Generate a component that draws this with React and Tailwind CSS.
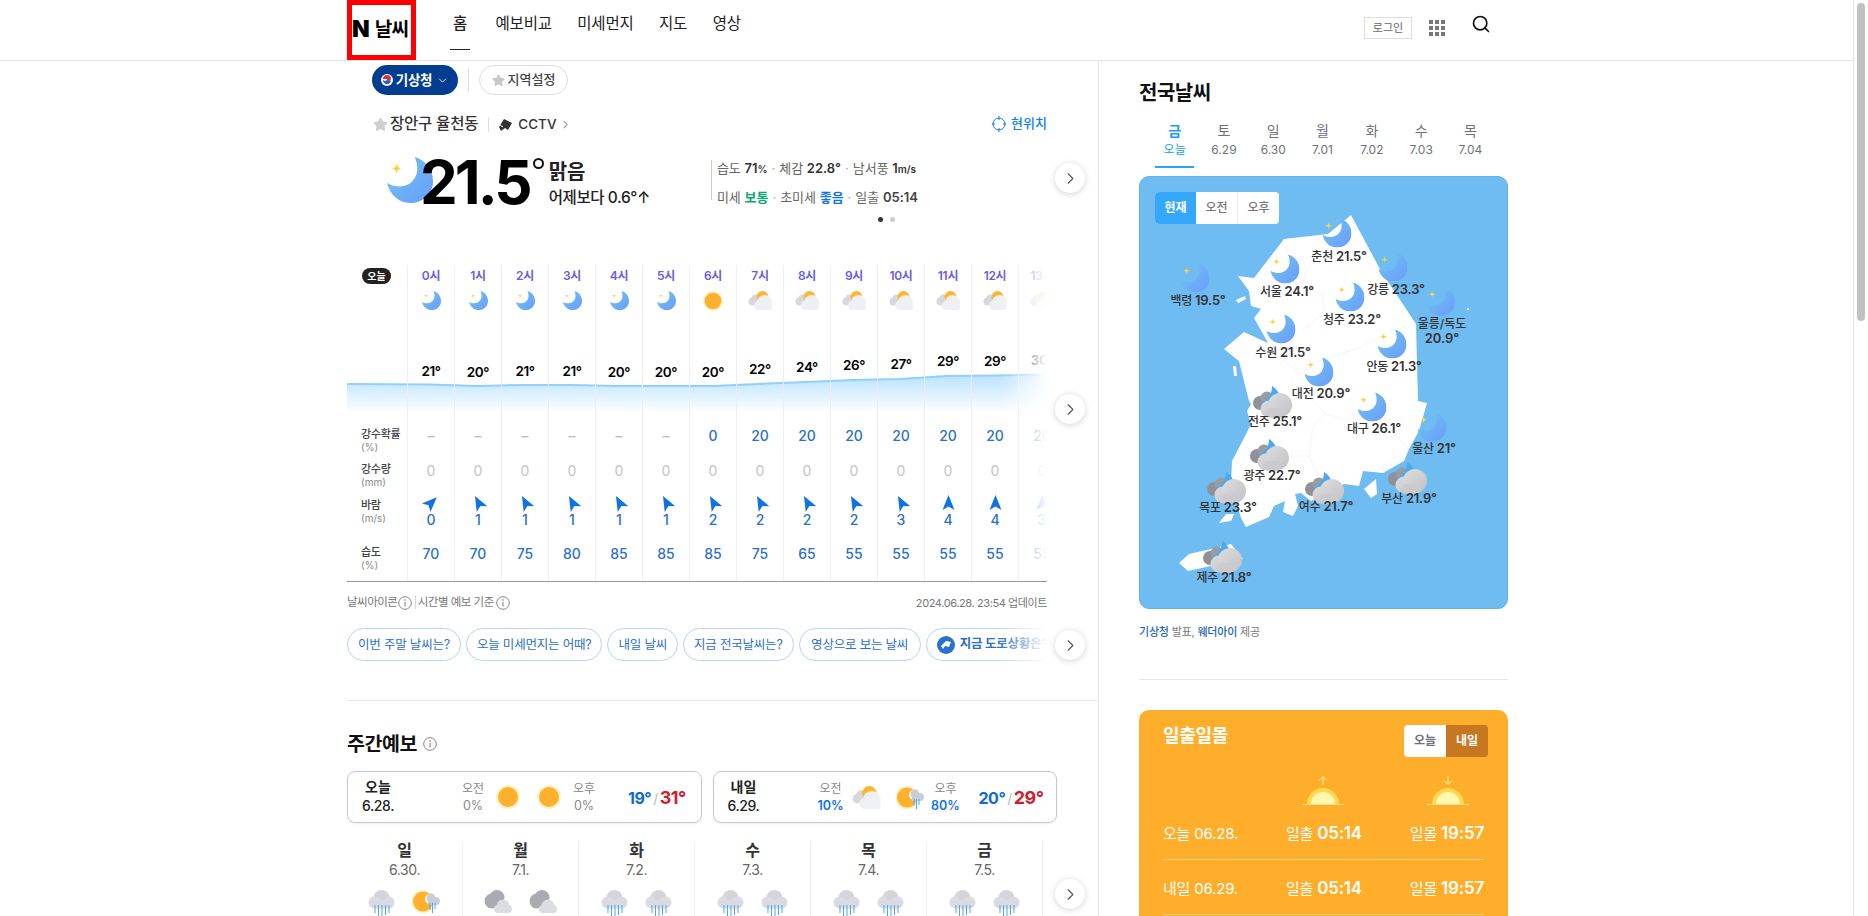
import React from "react";
import { ChevronRight, ChevronDown, Star, Search } from "lucide-react";

const Moon = ({ size = 19 }) => (
  <svg width={size} height={size} viewBox="0 0 100 100" className="shrink-0">
    <defs>
      <linearGradient id="mg" x1="0" y1="0" x2="1" y2="1">
        <stop offset="0" stopColor="#6fc6ef" />
        <stop offset="1" stopColor="#6a9cfc" />
      </linearGradient>
    </defs>
    <path d="M60 0C82 6 100 26 100 52C100 80 78 100 50 100C26 100 6 82 0 56C8 62 18 64 28 64C50 64 66 46 66 26C66 16 64 8 60 0Z" fill="url(#mg)" />
    <path d="M21 14C23 22 24 23 32 25C24 27 23 28 21 36C19 28 18 27 10 25C18 23 19 22 21 14Z" fill="#ffd23c" />
  </svg>
);

const Sun = ({ size = 20 }) => (
  <svg width={size} height={size} viewBox="0 0 24 24" className="shrink-0">
    <circle cx="12" cy="12" r="12" fill="#fff2c6" />
    <circle cx="12" cy="12" r="10" fill="#ffb12d" />
  </svg>
);

const CloudSun = ({ w = 25, h = 19 }) => (
  <svg width={w} height={h} viewBox="0 0 50 38" className="shrink-0">
    <circle cx="9" cy="21" r="8" fill="#d6d8de" />
    <circle cx="15" cy="15" r="8" fill="#d6d8de" />
    <circle cx="29" cy="12" r="12" fill="#ffb52e" />
    <circle cx="33" cy="23" r="15" fill="#eff0f4" />
    <circle cx="21" cy="29" r="9" fill="#eff0f4" />
    <rect x="21" y="28" width="27" height="10" rx="5" fill="#eff0f4" />
  </svg>
);

const RainLines = () => (
  <g stroke="#4ea6f2" strokeWidth="1">
    <path d="M7 15V23M10.5 15V26M14 15V27M17.5 15V25M21 15V23" />
  </g>
);

const RainCloud = () => (
  <svg width="27" height="27" viewBox="0 0 27 27" className="shrink-0">
    <circle cx="13.5" cy="8" r="8" fill="#d3d5da" />
    <circle cx="6.5" cy="12.5" r="6" fill="#dadbe0" />
    <circle cx="20.5" cy="12.5" r="6" fill="#dadbe0" />
    <rect x="6" y="10" width="15" height="8.5" fill="#dadbe0" />
    <RainLines />
  </svg>
);

const TwoClouds = () => (
  <svg width="28" height="23" viewBox="0 0 28 23" className="shrink-0">
    <circle cx="8" cy="11" r="7.5" fill="#a9abb0" />
    <circle cx="13" cy="7.5" r="7.5" fill="#a9abb0" />
    <rect x="4" y="10" width="14" height="8" fill="#a9abb0" />
    <circle cx="19" cy="16" r="6.5" fill="#dcdde2" />
    <circle cx="14" cy="19" r="4" fill="#dcdde2" />
    <circle cx="24" cy="19" r="4" fill="#dcdde2" />
    <rect x="13" y="17" width="12" height="6" fill="#dcdde2" />
  </svg>
);

const SunRain = () => (
  <svg width="29" height="23" viewBox="0 0 29 23" className="shrink-0">
    <circle cx="11" cy="11.5" r="11.5" fill="#fff0bf" />
    <circle cx="11" cy="11.5" r="10" fill="#ffb12d" />
    <circle cx="18" cy="9" r="5" fill="#fff" />
    <circle cx="19" cy="8" r="4.5" fill="#c9ced6" />
    <circle cx="24" cy="11" r="4" fill="#c9ced6" />
    <rect x="16" y="9" width="9" height="6" fill="#c9ced6" />
    <path d="M18 13V20M20.5 13V23M23 13V19" stroke="#4ea6f2" strokeWidth="1" />
  </svg>
);

const CloudMoon = () => (
  <svg width="40" height="32" viewBox="0 0 40 32">
    <defs>
      <linearGradient id="cg" x1="0" y1="0" x2="1" y2="1">
        <stop offset="0" stopColor="#dddddf" />
        <stop offset="1" stopColor="#c2c2c6" />
      </linearGradient>
    </defs>
    <circle cx="7" cy="17" r="7" fill="#8f9197" />
    <circle cx="14" cy="12" r="6.5" fill="#9a9ca2" />
    <path d="M19 0C24 3 27 8 27 12L24 18L7 16C14 15 19 9 19 0Z" fill="#4ba9f0" />
    <circle cx="16" cy="23" r="8.5" fill="url(#cg)" />
    <circle cx="27" cy="19" r="12" fill="url(#cg)" />
    <rect x="14" y="22" width="18" height="10" rx="5" fill="#cbcbcf" />
  </svg>
);

const Info = ({ size = 14 }) => (
  <svg width={size} height={size} viewBox="0 0 14 14" fill="none" className="shrink-0">
    <circle cx="7" cy="7" r="6.3" stroke="#777" strokeWidth="0.9" />
    <path d="M7 6V10.5" stroke="#777" />
    <circle cx="7" cy="4" r="0.8" fill="#777" />
  </svg>
);

const Arrow = ({ rot }) => (
  <svg width="13" height="15" viewBox="0 0 13 15" style={{ transform: `rotate(${rot}deg)` }}>
    <path d="M6.5 0L12.5 15L6.5 11.5L0.5 15Z" fill="#0f72e6" />
  </svg>
);

const SunHorizon = ({ down }) => (
  <svg width="42" height="30" viewBox="0 0 42 30">
    <path d={down ? "M21 1V9M17 5.5L21 9.5L25 5.5" : "M21 10V2M17 5.5L21 1.5L25 5.5"} stroke="#fff2a0" strokeWidth="1" fill="none" />
    <path d="M5 29A16 16 0 0 1 37 29Z" fill="#ffd84f" />
    <path d="M9 29A12 12 0 0 1 33 29Z" fill="#fff8ae" />
    <path d="M0 29.5H42" stroke="#ffe58a" strokeWidth="1" />
  </svg>
);

const Next = ({ className }) => (
  <button className={`absolute w-[30px] h-[30px] rounded-full bg-white shadow-[0_1px_6px_rgba(0,0,0,0.18)] flex items-center justify-center z-20 ${className}`}>
    <ChevronRight size={19} strokeWidth={1.4} color="#555" />
  </button>
);

const hours = [
  ["0시", "m", 21, "–", 0, 45, 0, 70], ["1시", "m", 20, "–", 0, -28, 1, 70], ["2시", "m", 21, "–", 0, -28, 1, 75],
  ["3시", "m", 21, "–", 0, -28, 1, 80], ["4시", "m", 20, "–", 0, -28, 1, 85], ["5시", "m", 20, "–", 0, -28, 1, 85],
  ["6시", "s", 20, "0", 0, -28, 2, 85], ["7시", "c", 22, "20", 0, -28, 2, 75], ["8시", "c", 24, "20", 0, -28, 2, 65],
  ["9시", "c", 26, "20", 0, -28, 2, 55], ["10시", "c", 27, "20", 0, -28, 3, 55], ["11시", "c", 29, "20", 0, 0, 4, 55],
  ["12시", "c", 29, "20", 0, 0, 4, 55], ["13시", "c", 30, "20", 0, 0, 3, 55],
];
const tempTop = { 20: 50, 21: 49, 22: 47, 24: 45, 26: 43, 27: 42, 29: 39, 30: 38 };

const chartLine = "M0 119 L83 119.5 L130 121 L177 120 L224 120 L271 121 L318 121 L365 121 L412 119 L459 117 L506 115 L553 114 L600 111 L647 110.5 L700 109.5";

const days = [
  ["일", "6.30.", <RainCloud />, <SunRain />], ["월", "7.1.", <TwoClouds />, <TwoClouds />],
  ["화", "7.2.", <RainCloud />, <RainCloud />], ["수", "7.3.", <RainCloud />, <RainCloud />],
  ["목", "7.4.", <RainCloud />, <RainCloud />], ["금", "7.5.", <RainCloud />, <RainCloud />],
];

const pins = [
  ["춘천", "21.5°", "m", 1337, 233, 1339, 256], ["강릉", "23.3°", "m", 1393, 267, 1396, 289],
  ["백령", "19.5°", "m", 1195, 278, 1198, 300], ["서울", "24.1°", "m", 1285, 269, 1287, 291],
  ["청주", "23.2°", "m", 1350, 297, 1352, 319], ["수원", "21.5°", "m", 1281, 329, 1283, 352],
  ["안동", "21.3°", "m", 1392, 344, 1394, 366], ["대전", "20.9°", "m", 1319, 372, 1321, 393],
  ["대구", "26.1°", "m", 1372, 407, 1374, 428], ["울산", "21°", "m", 1432, 427, 1434, 448],
  ["전주", "25.1°", "c", 1273, 402, 1275, 421], ["광주", "22.7°", "c", 1270, 455, 1272, 475],
  ["목포", "23.3°", "c", 1227, 488, 1228, 507], ["여수", "21.7°", "c", 1325, 488, 1326, 506],
  ["부산", "21.9°", "c", 1408, 478, 1409, 498], ["제주", "21.8°", "c", 1223, 557, 1224, 577],
];

const Sep = () => <span className="text-[#aaa] mx-[4px]">·</span>;

function Header() {
  return (
    <header className="h-[61px] border-b border-[#e5e5e5] flex items-start pl-[347px] pr-[362px] shrink-0">
      <div className="w-[69px] h-[60px] border-[5px] border-[#ff0000] flex items-center pb-[1px] gap-[5px] text-black">
        <span className="text-[23px] leading-none font-black">N</span>
        <span className="text-[19px] leading-none font-bold tracking-[-0.8px] whitespace-nowrap">날씨</span>
      </div>
      <nav className="ml-[34px] flex gap-[25.5px] text-[15.5px] leading-[24px] text-[#222] pt-[12px] tracking-[-0.2px]">
        <span className="relative px-[3px] font-medium">홈<span className="absolute left-0 right-0 top-[37px] h-px bg-[#222]" /></span>
        <span>예보비교</span><span>미세먼지</span><span>지도</span><span>영상</span>
      </nav>
      <div className="ml-auto flex items-start">
        <span className="mt-[17px] w-[48px] h-[22px] border border-[#ddd] text-[11px] leading-[20px] text-center text-[#666]">로그인</span>
        <span className="mt-[20px] ml-[17px] grid grid-cols-3 gap-[2px]">
          {[0,1,2,3,4,5,6,7,8].map((i) => <i key={i} className="w-[4px] h-[4px] bg-[#777]" />)}
        </span>
        <Search className="mt-[14px] ml-[26px]" size={20} strokeWidth={2} color="#111" />
      </div>
    </header>
  );
}

function Current() {
  return (
    <section className="relative h-[129px] pt-[21px] flex items-start">
      <div className="ml-[40px]"><Moon size={46} /></div>
      <div className="ml-[-13px] text-[60px] leading-[50px] font-bold text-black tracking-[-3px] relative z-10">21.5</div>
      <span className="ml-[3px] mt-[1px] w-[11px] h-[11px] rounded-full border-[2px] border-[#111]" />
      <div className="ml-[5px] mt-[2px] text-[#222]">
        <div className="text-[20px] leading-[26px] font-semibold">맑음</div>
        <div className="text-[15.5px] leading-[22px] mt-[2px] font-medium tracking-[-0.4px] whitespace-nowrap">어제보다 0.6°↑</div>
      </div>
      <div className="ml-[61px] mt-[3px] border-l border-[#ccc] pl-[5px] h-[40px] text-[13px] text-[#666] whitespace-nowrap">
        <div className="leading-[20px] mt-[-2px]">습도 <b className="font-semibold text-[#333]">71<small className="text-[10px]">%</small></b><Sep />체감 <b className="font-semibold text-[#333]">22.8°</b><Sep />남서풍 <b className="font-semibold text-[#333]">1<small className="text-[10px]">m/s</small></b></div>
        <div className="leading-[20px] mt-[8px]">미세 <b className="font-semibold text-[#0ca874]">보통</b><Sep />초미세 <b className="font-semibold text-[#0a75ee]">좋음</b><Sep />일출 <b className="font-semibold text-[#444]">05:14</b></div>
      </div>
      <div className="absolute left-[531px] top-[81px] flex gap-[7px]">
        <i className="w-[5px] h-[5px] rounded-full bg-[#333]" /><i className="w-[5px] h-[5px] rounded-full bg-[#ccc]" />
      </div>
      <Next className="left-[708px] top-[27px]" />
    </section>
  );
}

function Label({ a, b, h }) {
  return (
    <div className={`${h} flex flex-col justify-center pl-[14px]`}>
      <span className="text-[11px] leading-[13px] font-medium text-[#444] tracking-[-0.3px]">{a}</span>
      <span className="text-[10px] leading-[12px] text-[#888]">{b}</span>
    </div>
  );
}

function Hourly() {
  return (
    <section className="relative h-[317px] w-[700px] overflow-hidden border-b border-[#999]">
      <svg className="absolute left-0 top-0 w-[700px] h-[160px]" viewBox="0 0 700 160">
        <defs>
          <linearGradient id="ag" x1="0" y1="0" x2="0" y2="1">
            <stop offset="0" stopColor="#b9e2ff" />
            <stop offset="1" stopColor="#ffffff" />
          </linearGradient>
        </defs>
        <path d={`${chartLine} L700 148 L0 148Z`} fill="url(#ag)" />
        <path d={chartLine} fill="none" stroke="#8ed0ff" strokeWidth="2" />
      </svg>
      <div className="relative flex">
        <div className="w-[60px] shrink-0">
          <div className="h-[157px] pt-[3px] pl-[15px]">
            <span className="block w-[29px] h-[16px] rounded-full bg-[#222] text-white text-[10px] leading-[16px] text-center font-semibold">오늘</span>
          </div>
          <Label a="강수확률" b="(%)" h="h-[36px]" />
          <Label a="강수량" b="(mm)" h="h-[34px]" />
          <div className="h-[48px] pt-[4px]"><Label a="바람" b="(m/s)" h="h-[30px]" /></div>
          <Label a="습도" b="(%)" h="h-[36px]" />
        </div>
        {hours.map((h) => (
          <div key={h[0]} className="w-[47px] shrink-0 h-[317px] border-l border-[#eeeeee] flex flex-col items-center">
            <div className="h-[22px] text-[12px] leading-[22px] font-semibold text-[#6b5ce7] tracking-[-0.3px]">{h[0]}</div>
            <div className="h-[27px] flex items-center justify-center">
              {h[1] === "m" ? <Moon /> : h[1] === "s" ? <Sun /> : <CloudSun />}
            </div>
            <div className="h-[103px]">
              <div className="text-[13.5px] leading-[16px] font-semibold text-black tracking-[-0.4px]" style={{ marginTop: tempTop[h[2]] }}>{h[2]}°</div>
            </div>
            <div className={`h-[36px] flex items-center text-[14px] font-medium ${h[3] === "–" ? "text-[#bbb]" : "text-[#2a6fc9]"}`}>{h[3]}</div>
            <div className="h-[34px] flex items-center text-[14px] text-[#c4c4c4]">{h[4]}</div>
            <div className="h-[48px] flex flex-col items-center justify-center text-[14px] leading-[16px] font-medium text-[#2a6fc9]">
              <Arrow rot={h[5]} />
              <span className="mt-[2px]">{h[6]}</span>
            </div>
            <div className="h-[36px] flex items-center text-[14px] font-medium text-[#2a6fc9]">{h[7]}</div>
          </div>
        ))}
      </div>
      <div className="absolute right-0 top-0 bottom-0 w-[46px] bg-gradient-to-r from-white/0 to-white z-10" />
    </section>
  );
}

function Pills() {
  const items = ["이번 주말 날씨는?", "오늘 미세먼지는 어때?", "내일 날씨", "지금 전국날씨는?", "영상으로 보는 날씨"];
  return (
    <div className="relative w-[700px]">
      <div className="flex gap-[5px] h-[33px] overflow-hidden text-[12.5px] text-[#2a6fc9] tracking-[-0.2px] whitespace-nowrap">
        {items.map((t, i) => (
          <span key={t} className={`h-[33px] border border-[#b7d3f4] rounded-full leading-[31px] shrink-0 ${i === 4 ? "px-[11.5px]" : "px-[10px]"}`}>{t}</span>
        ))}
        <span className="h-[33px] px-[10px] border border-[#b7d3f4] rounded-full flex items-center gap-[5px] font-bold shrink-0">
          <svg width="18" height="18" viewBox="0 0 18 18"><circle cx="9" cy="9" r="9" fill="#2a72c9" /><path d="M4 10L9 5L14 6L12 11L8 10L6 13Z" fill="#fff" /></svg>
          지금 도로상황은?
        </span>
      </div>
      <div className="absolute right-0 top-0 bottom-0 w-[50px] bg-gradient-to-r from-white/0 to-white" />
    </div>
  );
}

function Period({ a, b, blue, w = "w-[40px]" }) {
  return (
    <div className={`${w} flex flex-col items-center`}>
      <span className="text-[12px] leading-[18px] text-[#888]">{a}</span>
      <span className={`text-[12.5px] leading-[16px] ${blue ? "text-[#0f72e6] font-semibold" : "text-[#888]"}`}>{b}</span>
    </div>
  );
}

function Temps({ lo, hi }) {
  return (
    <div className="flex items-baseline whitespace-nowrap font-bold tracking-[-0.5px]">
      <span className="text-[16px] text-[#0f68dc]">{lo}°</span>
      <span className="text-[14px] text-[#bbb] mx-[2px] font-normal">/</span>
      <span className="text-[18px] text-[#d0202e]">{hi}°</span>
    </div>
  );
}

function Weekly() {
  return (
    <section className="relative pt-[29px]">
      <div className="flex items-center gap-[6px]">
        <h2 className="text-[19.5px] leading-[28px] font-semibold text-[#111] tracking-[-0.4px]">주간예보</h2>
        <Info />
      </div>
      <div className="mt-[13px] flex gap-[11px] w-[710px]">
        <div className="w-[355px] h-[52px] border border-[#c8c8c8] rounded-[8px] flex items-center shadow-[0_1px_2px_rgba(0,0,0,0.06)]">
          <div className="w-[60px] text-center text-[#222] mt-[-2px]">
            <div className="text-[14px] leading-[20px] font-semibold">오늘</div>
            <div className="text-[14px] leading-[18px] font-medium tracking-[-0.4px]">6.28.</div>
          </div>
          <div className="ml-[45px]"><Period a="오전" b="0%" /></div>
          <div className="ml-[3px]"><Sun size={24} /></div>
          <div className="ml-[17px]"><Sun size={24} /></div>
          <div className="ml-[3px]"><Period a="오후" b="0%" /></div>
          <div className="ml-[24px]"><Temps lo={19} hi={31} /></div>
        </div>
        <div className="w-[345px] h-[52px] border border-[#c8c8c8] rounded-[8px] flex items-center shadow-[0_1px_2px_rgba(0,0,0,0.06)]">
          <div className="w-[60px] text-center text-[#222] mt-[-2px]">
            <div className="text-[14px] leading-[20px] font-semibold">내일</div>
            <div className="text-[14px] leading-[18px] font-medium tracking-[-0.4px]">6.29.</div>
          </div>
          <div className="ml-[37px]"><Period a="오전" b="10%" blue /></div>
          <div className="ml-[1px]"><CloudSun w={30} h={23} /></div>
          <div className="ml-[14px]"><SunRain /></div>
          <div className="ml-[1px]"><Period a="오후" b="80%" blue /></div>
          <div className="ml-[13px]"><Temps lo={20} hi={29} /></div>
        </div>
      </div>
      <div className="mt-[18px] flex w-[696px]">
        {days.map((d) => (
          <div key={d[0]} className="w-[116px] h-[92px] border-r border-[#eeeeee] flex flex-col items-center">
            <div className="text-[16px] leading-[18px] font-semibold text-[#333]">{d[0]}</div>
            <div className="text-[14px] leading-[20px] mt-[1px] text-[#666] tracking-[-0.4px]">{d[1]}</div>
            <div className="mt-[10px] flex items-start gap-[17px]">{d[2]}{d[3]}</div>
          </div>
        ))}
      </div>
      <Next className="left-[708px] top-[178px]" />
    </section>
  );
}

function NationalMap() {
  return (
    <div className="relative mt-[8px] h-[433px] rounded-[10px] bg-[#6fbcf3] border border-[#66b0e6] overflow-hidden">
      <svg className="absolute inset-0 w-[369px] h-[433px]" viewBox="1139 176 369 433">
        <g fill="#fff">
          <path d="M1350 214L1380 270L1415 323L1417 400L1426 402L1418 430L1408 448L1403 460L1382 472L1362 470L1358 485L1343 483L1310 500L1300 492L1294 493L1297 505L1292 515L1282 511L1284 500L1273 505L1268 516L1245 526L1240 517L1230 483L1231 460L1243 437L1250 423L1246 410L1250 403L1248 400L1238 360L1223 348L1243 331L1267 342L1253 317L1260 308L1250 305L1248 290L1237 275L1253 277L1283 238L1327 233Z" />
          <path d="M1178 562L1188 553L1210 548L1230 543L1242 558L1187 570Z" />
          <path d="M1363 488L1375 478L1376 493L1370 497Z" />
          <path d="M1218 522L1225 513L1233 513L1230 520Z" />
          <path d="M1235 299L1244 295L1245 298L1237 302Z" />
          <path d="M1232 365L1235 365L1236 375L1233 375Z" />
          <circle cx="1467" cy="308" r="1" />
        </g>
        <g fill="none" stroke="#eef2f9" strokeWidth="0.8">
          <path d="M1283 245L1307 267L1300 287L1322 292L1323 310L1290 340L1283 360L1300 372L1318 360L1360 346L1390 330L1415 323" />
          <path d="M1325 413L1312 425L1308 455L1292 455L1257 458L1238 448M1308 455L1318 477M1325 413L1358 423L1393 433L1408 448L1382 465L1383 472M1290 380L1325 413" />
        </g>
      </svg>
      <div className="absolute left-[15px] top-[15px] flex h-[32px] w-[124px] rounded-[4px] bg-white overflow-hidden text-[12px] leading-[32px] text-center font-medium text-[#777]">
        <span className="w-[41px] bg-[#36a8fb] text-white font-bold">현재</span>
        <span className="w-[42px] border-r border-[#eef0f4]">오전</span>
        <span className="w-[41px]">오후</span>
      </div>
      {pins.map((p) => (
        <React.Fragment key={p[0]}>
          <div className="absolute -translate-x-1/2 -translate-y-1/2" style={{ left: p[3] - 1140, top: p[4] - 177 }}>
            {p[2] === "m" ? <Moon size={29} /> : <CloudMoon />}
          </div>
          <div className="absolute -translate-x-1/2 -translate-y-1/2 whitespace-nowrap text-[12px] leading-[16px] text-[#333] font-medium tracking-[-0.2px]" style={{ left: p[5] - 1140, top: p[6] - 177 }}>
            {p[0]} <b className="text-[13px] font-semibold">{p[1]}</b>
          </div>
        </React.Fragment>
      ))}
      <div className="absolute left-[286px] top-[110px]"><Moon size={29} /></div>
      <div className="absolute left-[266px] top-[139px] w-[72px] text-center text-[12px] leading-[15px] text-[#333] font-medium">울릉/독도<br /><b className="text-[13px] font-semibold">20.9°</b></div>
    </div>
  );
}

function Sunrise() {
  const rows = [["오늘 06.28."], ["내일 06.29."]];
  return (
    <section className="mt-[30px] h-[300px] rounded-t-[10px] bg-[#ffae2b] px-[24px] text-white">
      <div className="flex items-start justify-between pt-[15px]">
        <h3 className="text-[18px] leading-[22px] font-semibold tracking-[-0.3px]">일출일몰</h3>
        <div className="flex h-[32px] w-[84px] rounded-[4px] overflow-hidden text-[12px] leading-[32px] text-center font-semibold mr-[-4px]">
          <span className="w-[42px] bg-white text-[#70707f]">오늘</span>
          <span className="w-[42px] bg-[#c77622]">내일</span>
        </div>
      </div>
      <div className="flex h-[30px] mt-[18px]">
        <div className="ml-[139px]"><SunHorizon /></div>
        <div className="ml-[83px]"><SunHorizon down /></div>
      </div>
      {rows.map((r) => (
        <div key={r[0]} className="h-[55px] pt-[4px] flex items-center border-b border-[#ffd083] text-[15px] tracking-[-0.2px] whitespace-nowrap">
          <span className="w-[123px]">{r[0]}</span>
          <span className="w-[124px]">일출 <b className="text-[17px] font-semibold">05:14</b></span>
          <span>일몰 <b className="text-[17px] font-semibold">19:57</b></span>
        </div>
      ))}
    </section>
  );
}

export default function App() {
  return (
    <div className="h-[916px] w-[1868px] overflow-hidden flex bg-white font-[Inter,'Noto_Sans_CJK_KR',sans-serif]">
      <div className="flex-1 flex flex-col min-w-0">
        <Header />
        <main className="flex flex-1 min-h-0">
          <div className="w-[1099px] shrink-0 border-r border-[#e5e5e5]">
            <div className="pl-[347px] pr-[51px]">
              <div className="mt-[4px] pl-[25px] h-[30px] flex items-center">
                <div className="w-[86px] h-[30px] rounded-full bg-[#033d8f] text-white text-[13.5px] font-semibold flex items-center justify-center gap-[3px] tracking-[-0.2px]">
                  <svg width="12" height="12" viewBox="0 0 12 12"><circle cx="6" cy="6" r="6" fill="#fff" /><path d="M2 5A4 4 0 0 1 10 5A2 2 0 0 1 6 5Z" fill="#d9323c" /><path d="M2 5A4 4 0 0 0 10 7A4 4 0 0 1 6 5A2 2 0 0 1 2 5Z" fill="#2a5bd0" /></svg>
                  기상청<ChevronDown size={13} strokeWidth={1.5} className="ml-[1px]" />
                </div>
                <span className="w-px h-[23px] bg-[#ddd] mx-[10px]" />
                <div className="w-[89px] h-[30px] rounded-full border border-[#ddd] text-[#444] text-[13px] font-medium flex items-center justify-center gap-[3px]">
                  <Star size={13} fill="#c8c8c8" color="#c8c8c8" />지역설정
                </div>
              </div>
              <div className="mt-[17px] h-[24px] pl-[26px] flex items-center text-[#333]">
                <Star size={15} fill="#cfcfcf" color="#cfcfcf" />
                <span className="ml-[2px] text-[15.5px] font-medium tracking-[-0.2px]">장안구 율천동</span>
                <span className="w-px h-[15px] bg-[#ddd] mx-[10px]" />
                <svg width="14" height="13" viewBox="0 0 14 13"><path d="M0 9L5 1L13 5L9 12L6 10L2 13Z" fill="#333" /><path d="M1 7L4 9" stroke="#fff" /></svg>
                <span className="ml-[5px] text-[13.5px] font-medium">CCTV</span>
                <ChevronRight size={13} strokeWidth={1.4} className="ml-[3px]" />
                <span className="ml-auto flex items-center gap-[5px] text-[#0a7ff0] text-[13px] font-medium">
                  <svg width="14" height="16" viewBox="0 0 14 16" fill="none" stroke="#0a7ff0"><circle cx="7" cy="8" r="6" /><path d="M7 0V4M7 12V16M0 8H3M11 8H14" /></svg>
                  현위치
                </span>
              </div>
              <Current />
              <div className="relative">
                <Hourly />
                <Next className="left-[708px] top-[129px]" />
              </div>
              <div className="mt-[12px] h-[18px] flex items-center text-[11.5px] text-[#777] tracking-[-0.5px] whitespace-nowrap">
                날씨아이콘<span className="mx-[1px]"><Info size={14} /></span><span className="mr-[1px] text-[#ccc]">|</span>시간별 예보 기준<span className="ml-[2px]"><Info size={14} /></span>
                <span className="ml-auto text-[11px] tracking-[-0.4px]">2024.06.28. 23:54 업데이트</span>
              </div>
              <div className="relative mt-[16px]">
                <Pills />
                <Next className="left-[708px] top-[2px]" />
              </div>
            </div>
            <div className="ml-[347px] mt-[39px] h-px bg-[#e8e8e8]" />
            <div className="pl-[347px] pr-[51px]">
              <Weekly />
            </div>
          </div>
          <div className="w-[754px] shrink-0 pl-[40px] pr-[345px]">
            <h2 className="mt-[18px] text-[20px] leading-[28px] font-semibold text-[#111] tracking-[-0.5px]">전국날씨</h2>
            <div className="mt-[14px] ml-[11px] flex h-[47px]">
              {[["금","오늘"],["토","6.29"],["일","6.30"],["월","7.01"],["화","7.02"],["수","7.03"],["목","7.04"]].map((d, i) => (
                <div key={d[0]} className={`w-[49.3px] flex flex-col items-center ${i === 0 ? "text-[#1a9cf8]" : "text-[#70707a]"}`}>
                  <span className={`text-[14px] leading-[20px] ${i === 0 ? "font-bold" : ""}`}>{d[0]}</span>
                  <span className="text-[12px] leading-[18px]">{d[1]}</span>
                  {i === 0 && <span className="mt-auto w-[39px] h-[2px] bg-[#27a4fb]" />}
                </div>
              ))}
            </div>
            <NationalMap />
            <div className="mt-[16px] text-[11px] leading-[14px] text-[#777] tracking-[-0.2px]">
              <b className="font-medium text-[#1c67b0]">기상청</b> 발표, <b className="font-medium text-[#1c67b0]">웨더아이</b> 제공
            </div>
            <div className="mt-[40px] h-px bg-[#e8e8e8]" />
            <Sunrise />
          </div>
        </main>
      </div>
      <aside className="w-[15px] shrink-0 border-l border-[#e5e5e5] pt-[3px]">
        <div className="mx-auto w-[8px] h-[318px] rounded-full bg-[#c1c1c1]" />
      </aside>
    </div>
  );
}
